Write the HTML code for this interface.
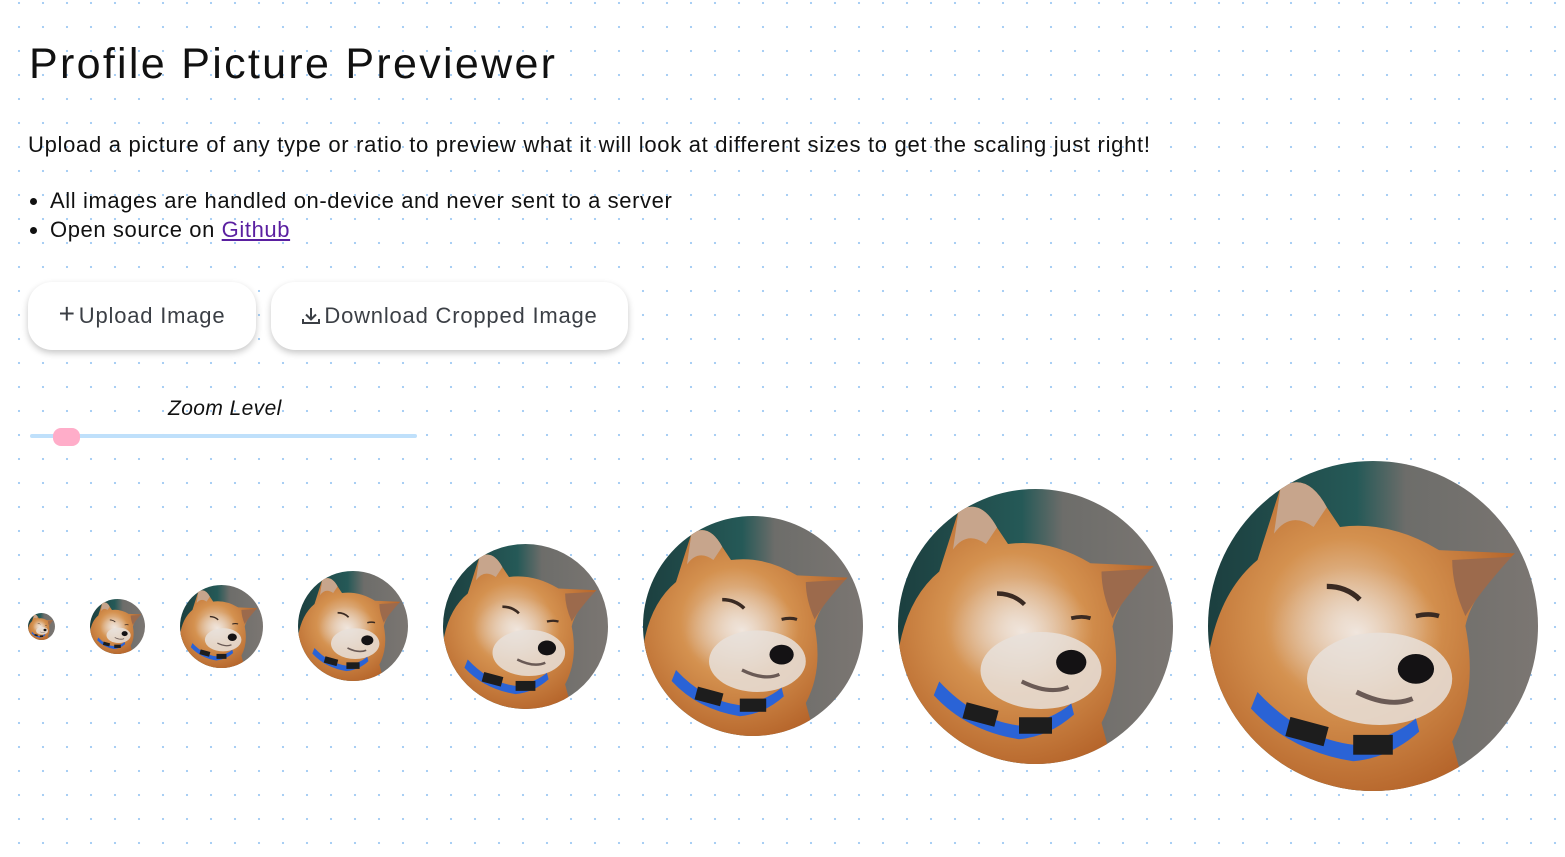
<!DOCTYPE html>
<html><head><meta charset="utf-8"><style>
html,body{margin:0;padding:0}
body{width:1565px;height:857px;overflow:hidden;font-family:"Liberation Sans",sans-serif;color:#111;
background-color:#fff;background-image:radial-gradient(circle,#9fcaf3 0.9px,transparent 1.3px);background-size:24px 24px;background-position:7px -9px;position:relative}
h1{position:absolute;left:29px;top:40px;margin:0;font-size:43px;font-weight:normal;letter-spacing:2.3px}
p{position:absolute;left:28px;top:132px;margin:0;font-size:22px;letter-spacing:0.7px}
ul{position:absolute;left:28px;top:186px;margin:0;padding:0 0 0 22px;font-size:22px;line-height:29px;letter-spacing:0.6px}
a{color:#5a1fa0}
.btn{position:absolute;top:282px;height:68px;background:#fff;border-radius:24px;box-shadow:0 3px 7px rgba(0,0,0,.22);font-size:22px;color:#3b3f45;display:flex;align-items:center;justify-content:center;letter-spacing:.8px}
.lbl{position:absolute;left:168px;top:397px;font-style:italic;font-size:21px;letter-spacing:.4px}
.track{position:absolute;left:30px;top:434px;width:387px;height:4px;background:#bfe0fb;border-radius:2px}
.thumb{position:absolute;left:53px;top:428px;width:27px;height:18px;background:#ffadc9;border-radius:8px}
.av{position:absolute;border-radius:50%;overflow:hidden}
.av svg{width:100%;height:100%;display:block}
</style></head><body>
<svg width="0" height="0" style="position:absolute">
<defs>
<radialGradient id="fur" cx="45%" cy="45%" r="60%"><stop offset="0" stop-color="#e9d6c4"/><stop offset=".45" stop-color="#d4914f"/><stop offset="1" stop-color="#b5642a"/></radialGradient>
<radialGradient id="face" cx="50%" cy="50%" r="50%"><stop offset="0" stop-color="#f0e6de"/><stop offset="1" stop-color="#e4c8ae" stop-opacity="0"/></radialGradient>
<linearGradient id="bg" x1="0" x2="1"><stop offset="0" stop-color="#1c3f3f"/><stop offset=".45" stop-color="#255957"/><stop offset=".6" stop-color="#6d6d6a"/><stop offset="1" stop-color="#7b7672"/></linearGradient>
<symbol id="dog" viewBox="0 0 100 100">
<rect width="100" height="100" fill="url(#bg)"/>
<path d="M0 60 Q3 40 15 30 L22 8 Q30 3 36 14 L40 20 Q55 18 70 27 L93 28 Q80 40 78 50 Q82 70 74 85 L78 100 L0 100Z" fill="url(#fur)"/>
<path d="M22 8 Q30 3 36 14 L32 20 Q25 15 20 22Z" fill="#c7a58c"/>
<path d="M74 30 L92 29 Q82 40 78 47 Q74 38 74 30Z" fill="#9c6a4c"/>
<ellipse cx="45" cy="52" rx="26" ry="20" fill="url(#face)"/>
<ellipse cx="52" cy="66" rx="22" ry="14" fill="#e8e0da" opacity=".85"/>
<path d="M36 38 Q42 38 46 42" stroke="#3a2a22" stroke-width="1.6" fill="none"/>
<path d="M63 47 Q67 46 70 47" stroke="#3a2a22" stroke-width="1.4" fill="none"/>
<ellipse cx="63" cy="63" rx="5.5" ry="4.5" fill="#141214"/>
<path d="M45 70 Q55 75 62 72" stroke="#6a5a55" stroke-width="1.5" fill="none"/>
<path d="M15 70 Q28 84 44 86 Q56 84 63 78 L64 82 Q55 90 44 91 Q25 88 13 75Z" fill="#2a63d6"/>
<rect x="24" y="79" width="12" height="6" fill="#1d1d1d" transform="rotate(15 30 82)"/>
<rect x="44" y="83" width="12" height="6" fill="#1d1d1d"/>
</symbol>
</defs></svg>
<h1>Profile Picture Previewer</h1>
<p>Upload a picture of any type or ratio to preview what it will look at different sizes to get the scaling just right!</p>
<ul><li>All images are handled on-device and never sent to a server</li><li>Open source on <a href="#">Github</a></li></ul>
<div class="btn" style="left:28px;width:228px"><span style="font-size:28px;margin-right:3px;margin-top:-4px">+</span>Upload Image</div>
<div class="btn" style="left:271px;width:357px"><svg width="20" height="20" viewBox="0 0 20 20" style="margin-right:3px"><path d="M10 2v11M5 8.5l5 5 5-5M2 13v4h16v-4" stroke="#3b3f45" stroke-width="2" fill="none"/></svg>Download Cropped Image</div>
<div class="lbl">Zoom Level</div>
<div class="track"></div><div class="thumb"></div>
<div class="av" style="left:28px;top:613px;width:27px;height:27px"><svg><use href="#dog"/></svg></div>
<div class="av" style="left:90px;top:599px;width:55px;height:55px"><svg><use href="#dog"/></svg></div>
<div class="av" style="left:180px;top:585px;width:83px;height:83px"><svg><use href="#dog"/></svg></div>
<div class="av" style="left:298px;top:571px;width:110px;height:110px"><svg><use href="#dog"/></svg></div>
<div class="av" style="left:443px;top:544px;width:165px;height:165px"><svg><use href="#dog"/></svg></div>
<div class="av" style="left:643px;top:516px;width:220px;height:220px"><svg><use href="#dog"/></svg></div>
<div class="av" style="left:898px;top:489px;width:275px;height:275px"><svg><use href="#dog"/></svg></div>
<div class="av" style="left:1208px;top:461px;width:330px;height:330px"><svg><use href="#dog"/></svg></div>
</body></html>
